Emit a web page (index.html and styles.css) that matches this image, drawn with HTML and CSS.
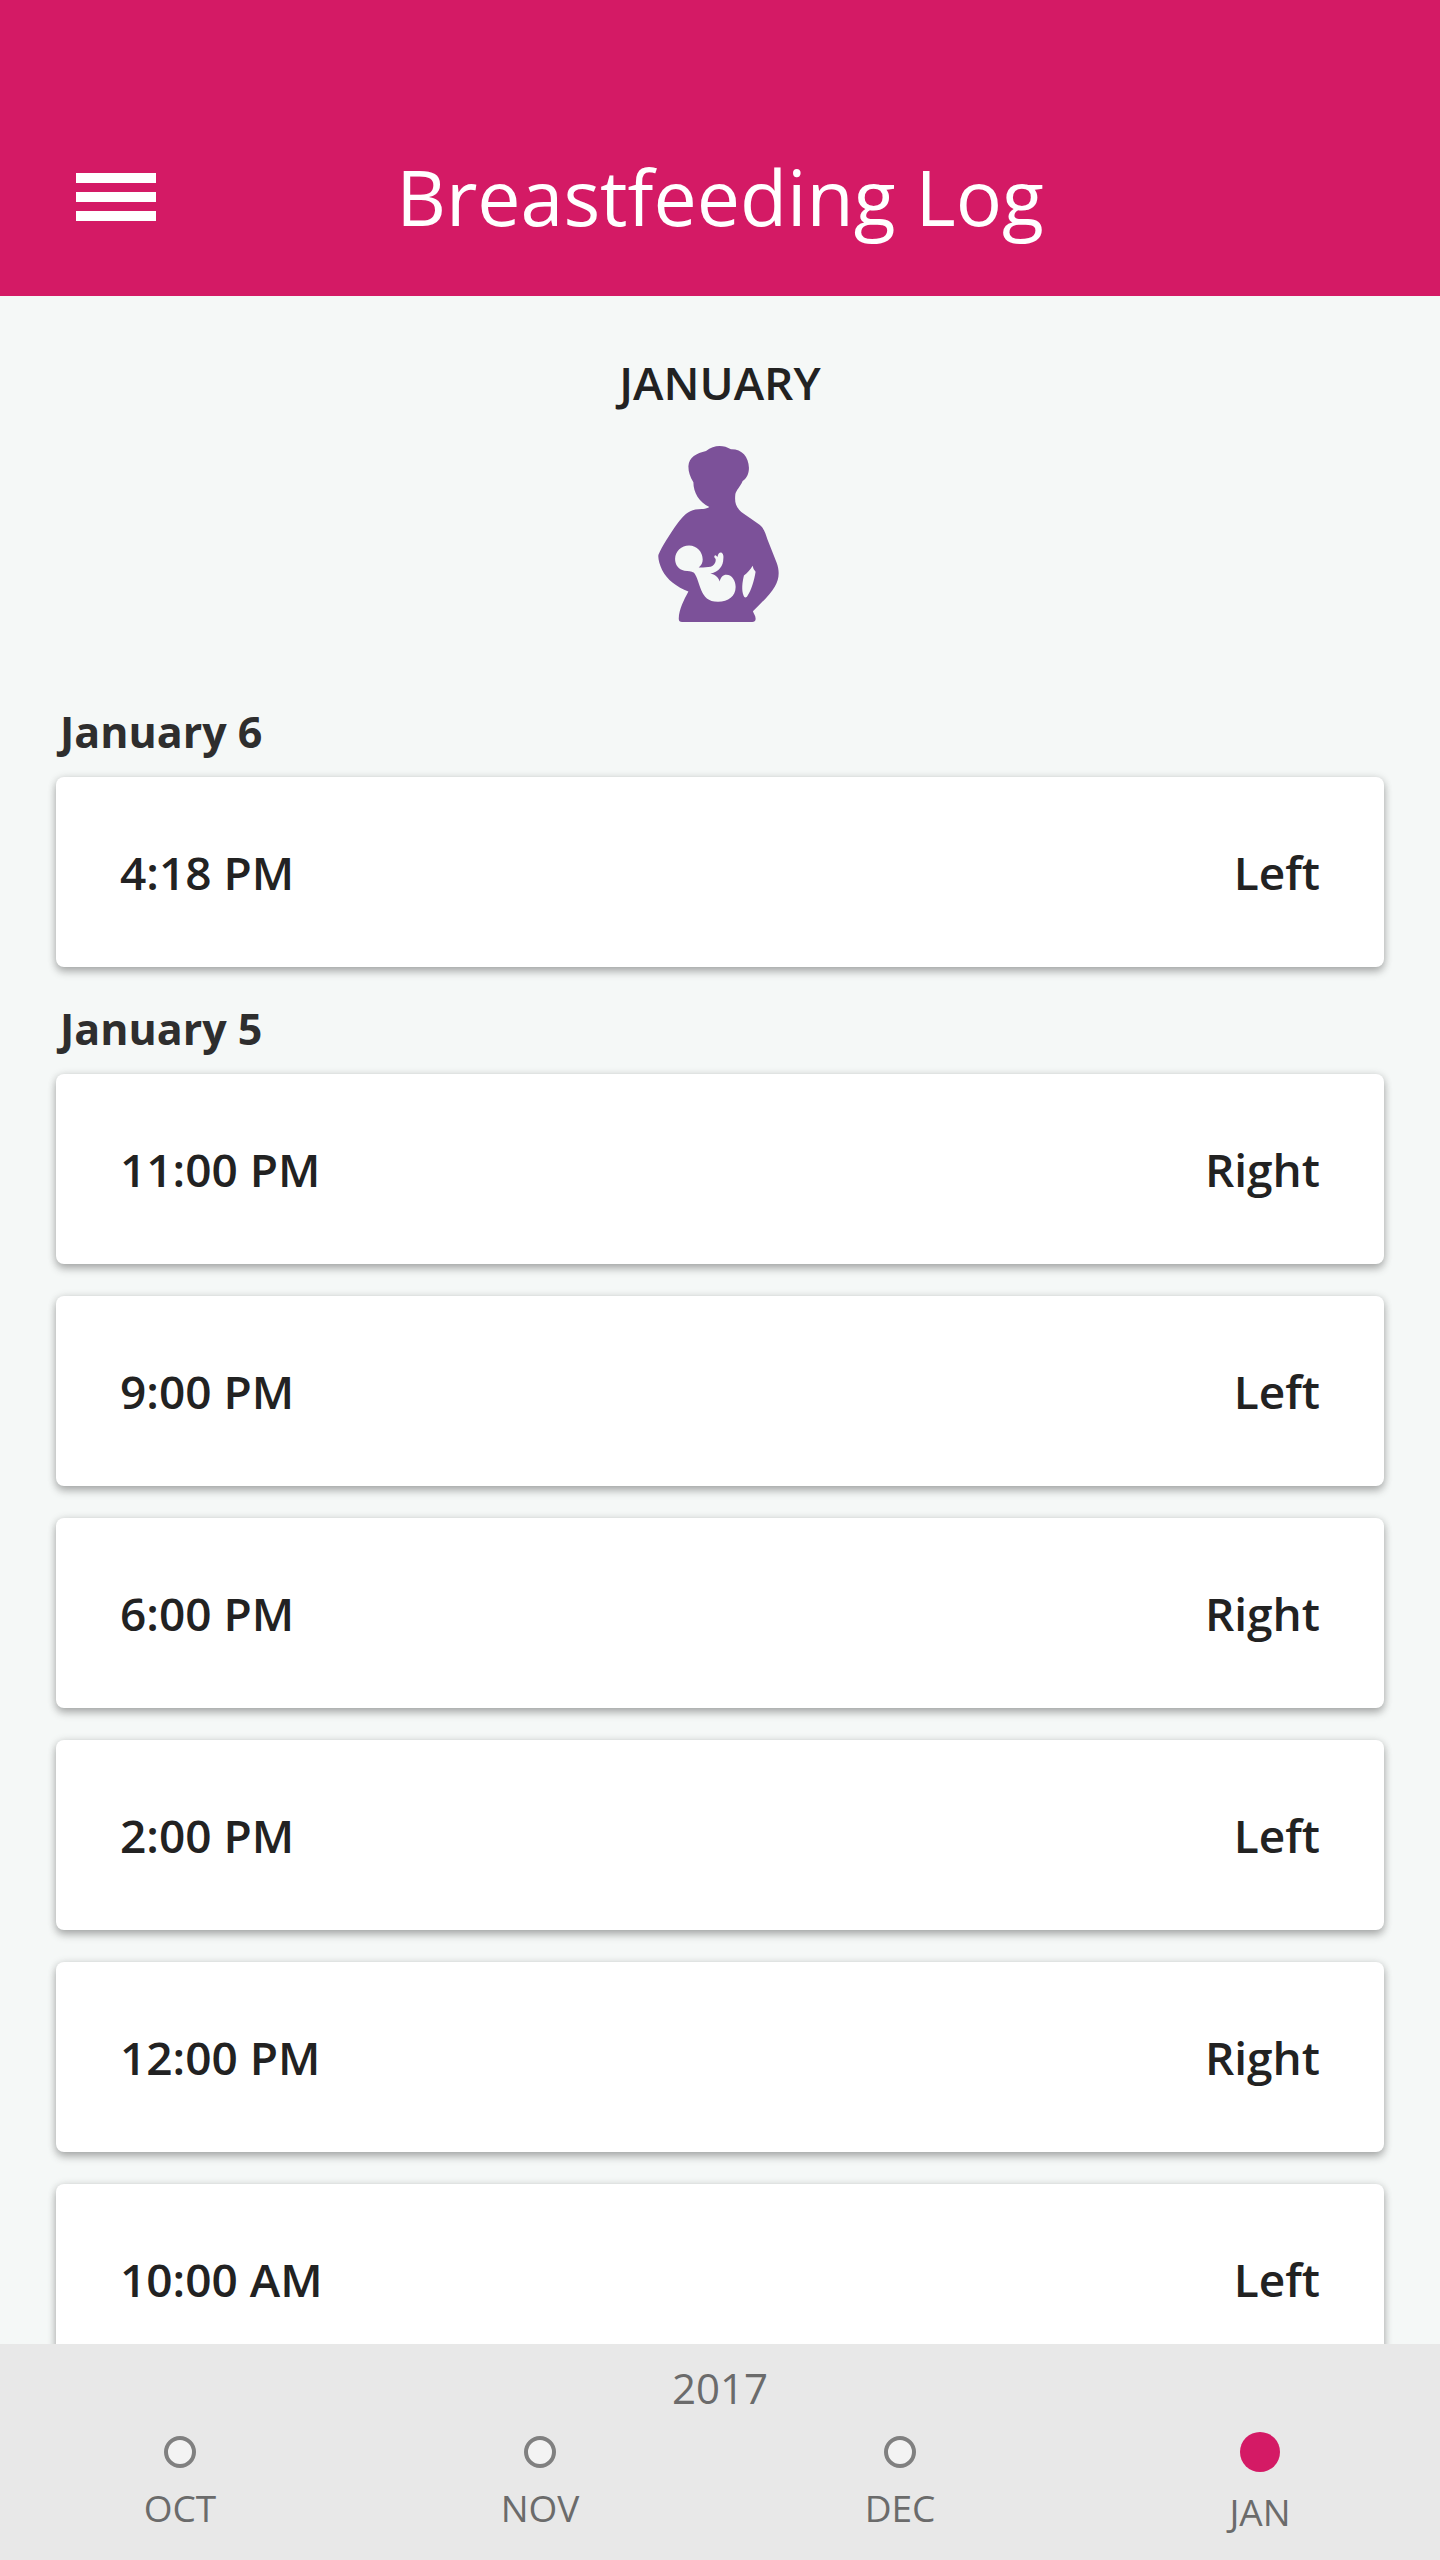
FILE: index.html
```html
<!DOCTYPE html>
<html lang="en">
<head>
    <meta charset="UTF-8">
    <meta name="viewport" content="width=device-width, initial-scale=1">
    <title>Breastfeeding Log</title>
    <link rel="stylesheet" href="styles.css">
</head>
<body>
<header class="header">
    <button class="menu" type="button" aria-label="Menu">
        <span></span>
        <span></span>
        <span></span>
    </button>
    <h1>Breastfeeding Log</h1>
</header>

<main class="content">
    <h2 class="month">JANUARY</h2>
    <svg class="mother" viewBox="54 47 372 529" aria-hidden="true">
        <path class="body" d="M198 62C222 43 250 43 273 57C305 56 326 79 327 112C327 130 320 144 308 152C302 168 288 180 286 193C284 214 286 229 304 245C322 259 343 270 359 284C374 296 378 314 383 329L410 397C420 424 418 446 405 469C390 494 362 521 339 544C341 552 348 558 347 568Q346 576 337 576H126Q116 576 116 566C117 536 132 509 145 484C111 472 80 449 66 420C58 402 53 384 55 374C66 349 89 312 112 280C130 257 144 242 166 238C182 236 198 237 208 230C177 216 160 187 160 156C150 139 145 126 145 108C147 80 169 69 198 62Z"/>
        <path class="baby" d="M147 346C171 346 188 366 188 388C188 398 184 406 176 412C191 412 208 413 217 408C225 403 228 395 227 387C221 381 222 376 226 375C229 376 230 379 233 380C233 373 237 367 243 367C250 369 251 378 250 386C250 406 238 426 211 431C225 433 235 441 239 454C242 442 249 434 259 434C277 434 287 453 287 471C287 499 265 515 234 515C204 515 192 499 184 481C176 463 173 443 162 428C153 422 145 424 133 422C115 418 105 405 105 386C106 363 124 346 147 346Z"/>
        <path class="baby" d="M338 407L341 417L347 425C343 450 335 480 321 500Q314 506 311 497C304 480 307 456 312 436C322 429 332 418 338 407Z"/>
    </svg>

    <section>
        <h3>January 6</h3>
        <ul>
            <li><span>4:18 PM</span><span>Left</span></li>
        </ul>
    </section>
    <section>
        <h3>January 5</h3>
        <ul>
            <li><span>11:00 PM</span><span>Right</span></li>
            <li><span>9:00 PM</span><span>Left</span></li>
            <li><span>6:00 PM</span><span>Right</span></li>
            <li><span>2:00 PM</span><span>Left</span></li>
            <li><span>12:00 PM</span><span>Right</span></li>
            <li><span>10:00 AM</span><span>Left</span></li>
        </ul>
    </section>
</main>

<footer class="timeline">
    <div class="year">2017</div>
    <nav class="months">
        <button type="button"><i class="dot"></i>OCT</button>
        <button type="button"><i class="dot"></i>NOV</button>
        <button type="button"><i class="dot"></i>DEC</button>
        <button type="button" class="current" aria-current="true"><i class="dot"></i>JAN</button>
    </nav>
</footer>
</body>
</html>
```
FILE: styles.css
```css
* {
    margin: 0;
    padding: 0;
    box-sizing: border-box;
    list-style: none;
}

body {
    display: flex;
    flex-direction: column;
    height: 100vh;
    font-family: "Open Sans", "Noto Sans", sans-serif;
    color: #222;
    background-color: #f5f8f7;
}

button {
    font: inherit;
    color: inherit;
    background: none;
    border: none;
    cursor: pointer;
}

/* header */
.header {
    display: grid;
    grid-template-columns: 1fr auto 1fr;
    align-items: center;
    flex: none;
    padding: 98px 76px 0;
    color: #fff;
    background-color: #d41a65;
}

.header h1 {
    font-size: 77px;
    line-height: 198px;
    font-weight: 400;
}

.menu {
    display: flex;
    flex-direction: column;
    gap: 9px;
    width: 80px;
}

.menu span {
    height: 10px;
    background-color: #fff;
}

/* log */
.content {
    flex: 1;
    min-height: 0;
    padding: 54px 56px 0;
    overflow-y: auto;
    scrollbar-width: none;
}

.month {
    font-size: 46px;
    line-height: 64px;
    font-weight: 600;
    text-align: center;
}

.mother {
    display: block;
    width: 124px;
    height: 176px;
    margin: 32px auto 80px;
}

.mother .body {
    fill: #7c5199;
}

.mother .baby {
    fill: #f5f8f7;
}

h3 {
    padding: 0 4px 15px;
    font-size: 43px;
    line-height: 60px;
    font-weight: 700;
    color: #2e2e2e;
}

li {
    display: flex;
    justify-content: space-between;
    align-items: center;
    height: 190px;
    margin-bottom: 32px;
    padding: 0 64px;
    font-size: 46px;
    font-weight: 600;
    background-color: #fff;
    border-radius: 8px;
    box-shadow: 0 5px 8px rgba(0, 0, 0, .24), 0 1px 8px rgba(0, 0, 0, .16);
}

/* timeline */
.timeline {
    flex: none;
    padding: 14px 0 23px;
    color: #6b6b6b;
    background-color: #e8e8e8;
}

.year {
    margin-bottom: 14px;
    font-size: 42px;
    line-height: 60px;
    text-align: center;
}

.months {
    display: flex;
    align-items: center;
}

.months button {
    display: flex;
    flex: 1;
    flex-direction: column;
    align-items: center;
    gap: 15px;
    font-size: 37px;
    line-height: 50px;
}

.dot {
    width: 32px;
    height: 32px;
    background-color: #f3f3f3;
    border: 4px solid #808080;
    border-radius: 50%;
}

.current .dot {
    width: 40px;
    height: 40px;
    background-color: #d41a65;
    border: none;
}
```
